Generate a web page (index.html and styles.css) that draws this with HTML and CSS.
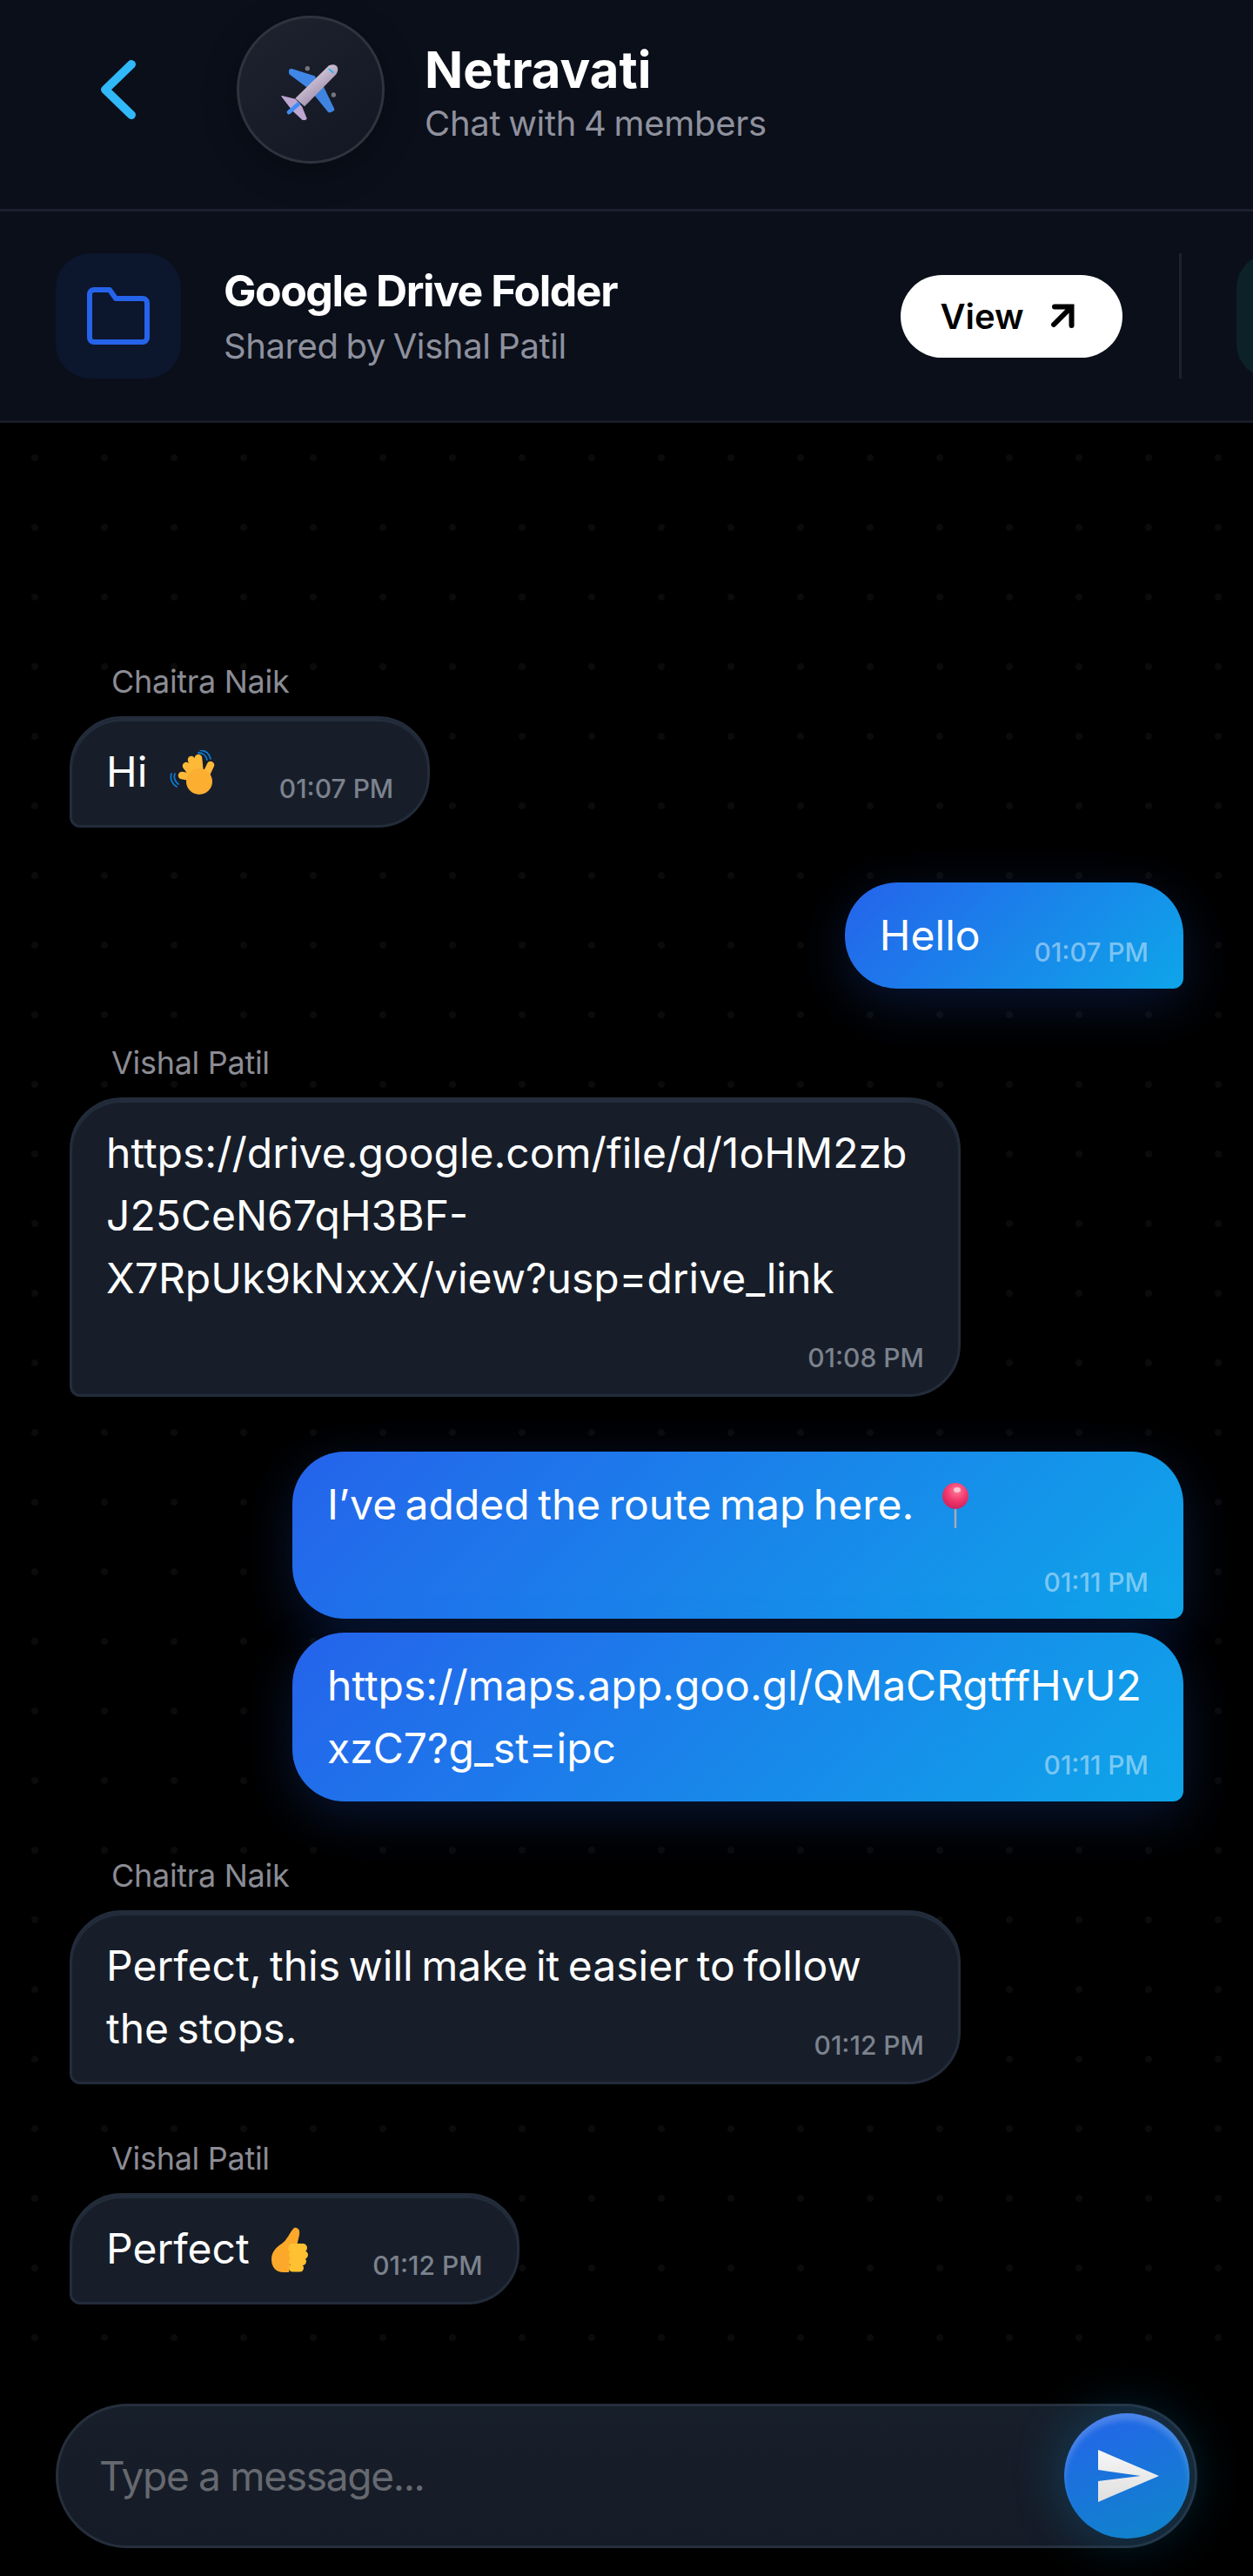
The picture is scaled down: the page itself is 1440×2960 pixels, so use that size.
FILE: index.html
```html
<!DOCTYPE html>
<html lang="en">
  <head>
    <meta charset="UTF-8" />
    <meta name="viewport" content="width=device-width, initial-scale=1.0" />
    <title>Netravati - Chat</title>
    <link rel="stylesheet" href="styles.css">
  </head>

  <body>
    <div class="app">
      <header class="top-bar">
        <button class="back-btn" type="button" aria-label="Back">
          <svg width="40" height="68" viewBox="0 0 40 68"><path d="M35 5 5 34l30 29" fill="none" stroke="#30b8f8" stroke-width="10" stroke-linecap="round" stroke-linejoin="round"/></svg>
        </button>
        <div class="avatar">
          <svg width="70" height="70" viewBox="-2 -15 210 210">
            <defs>
              <linearGradient id="bodyGrad" x1="0.2" y1="0.2" x2="0.6" y2="0.7">
                <stop offset="0" stop-color="#e0d6e4"/>
                <stop offset="1" stop-color="#a897b4"/>
              </linearGradient>
            </defs>
            <circle cx="92" cy="17" r="8" fill="#77767d"/>
            <circle cx="182" cy="108" r="8" fill="#77767d"/>
            <path d="M36 26 112 50 92 74 36 32Z" fill="#4087e6" stroke="#4087e6" stroke-width="16" stroke-linejoin="round"/>
            <path d="M138 76 178 158 168 162 116 98Z" fill="#3f84e0" stroke="#3f84e0" stroke-width="14" stroke-linejoin="round"/>
            <path d="M4 113 50 124 72 150 88 190 80 197 42 162Z" fill="#bda6d2" stroke="#bda6d2" stroke-width="4" stroke-linejoin="round"/>
            <path d="M166 7C180 1 193 3 196 15 199 26 193 37 184 44L82 148 50 120Z" fill="url(#bodyGrad)"/>
            <path d="M28 168 60 140" stroke="#3f8cf5" stroke-width="14" stroke-linecap="round"/>
            <path d="M167 19 180 31" stroke="#19b2f5" stroke-width="5" stroke-linecap="round"/>
          </svg>
        </div>
        <div class="chat-info">
          <h1 class="chat-title">Netravati</h1>
          <p class="chat-sub">Chat with 4 members</p>
        </div>
      </header>

      <section class="shared-strip">
        <div class="shared-card">
          <div class="shared-icon">
            <svg width="72" height="66" viewBox="0 0 72 66"><path d="M3 8a5 5 0 0 1 5-5h18l7 10h31a5 5 0 0 1 5 5v40a5 5 0 0 1-5 5H8a5 5 0 0 1-5-5Z" fill="none" stroke="#2563eb" stroke-width="6" stroke-linejoin="round"/></svg>
          </div>
          <div class="shared-text">
            <div class="shared-name">Google Drive Folder</div>
            <div class="shared-by">Shared by Vishal Patil</div>
          </div>
          <a class="view-btn" href="#">
            View
            <svg width="28" height="28" viewBox="0 0 28 28"><path d="M4 24 24 4M5 3.500h19.500V25" fill="none" stroke="#000" stroke-width="6" stroke-linecap="round"/></svg>
          </a>
        </div>
        <div class="strip-divider"></div>
        <div class="shared-icon shared-icon-next"></div>
      </section>

      <main class="chat">
        <div class="group">
          <div class="sender">Chaitra Naik</div>
          <div class="bubble theirs row">
            <span class="text">Hi
              <svg class="emoji emoji-end" width="52" height="52" viewBox="0 0 52 52">
                <g fill="none" stroke="#1079cc" stroke-width="1.800" stroke-linecap="round">
                  <path d="M33 3C38 3 42 6 43 11"/>
                  <path d="M35 0C41 0 46 4 47 10"/>
                  <path d="M6 27C4 31 6 36 10 39"/>
                  <path d="M2 27C0 33 3 39 8 42"/>
                </g>
                <g fill="none" stroke="#ffb938" stroke-width="8.500" stroke-linecap="round">
                  <path d="M30 32 14 29"/>
                  <path d="M30 32 19 18"/>
                  <path d="M32 30 25 11"/>
                  <path d="M35 30 33 9"/>
                  <path d="M40 32 47 17"/>
                </g>
                <circle cx="34" cy="36" r="15" fill="#fbae30"/>
              </svg>
            </span>
            <span class="time">01:07 PM</span>
          </div>
        </div>

        <div class="group mine">
          <div class="bubble own row">
            <span class="text">Hello</span>
            <span class="time">01:07 PM</span>
          </div>
        </div>

        <div class="group">
          <div class="sender">Vishal Patil</div>
          <div class="bubble theirs wide">
            <span class="text">https://drive.google.com/file/d/1oHM2zbJ25CeN67qH3BF-<br>X7RpUk9kNxxX/view?usp=drive_link</span>
            <span class="time time-row">01:08 PM</span>
          </div>
        </div>

        <div class="group mine">
          <div class="bubble own wide">
            <span class="text">I’ve added the route map here.
              <svg class="emoji emoji-pin" width="30" height="52" viewBox="0 0 30 52">
                <defs>
                  <radialGradient id="pinGrad" cx="0.55" cy="0.3" r="0.75">
                    <stop offset="0" stop-color="#ff7d9c"/>
                    <stop offset="0.5" stop-color="#f23a6d"/>
                    <stop offset="1" stop-color="#c81e5c"/>
                  </radialGradient>
                </defs>
                <path d="M15 28V51" stroke="#a9a9b8" stroke-width="2.500" stroke-linecap="round"/>
                <circle cx="15" cy="15" r="15" fill="url(#pinGrad)"/>
                <ellipse cx="17" cy="8" rx="4" ry="3" fill="#ffc4d2"/>
              </svg>
            </span>
            <span class="time time-row">01:11 PM</span>
          </div>
          <div class="bubble own wide">
            <span class="text">https://maps.app.goo.gl/QMaCRgtffHvU2</span>
            <div class="last-line">
              <span class="text">xzC7?g_st=ipc</span>
              <span class="time">01:11 PM</span>
            </div>
          </div>
        </div>

        <div class="group">
          <div class="sender">Chaitra Naik</div>
          <div class="bubble theirs wide">
            <span class="text">Perfect, this will make it easier to follow</span>
            <div class="last-line">
              <span class="text">the stops.</span>
              <span class="time">01:12 PM</span>
            </div>
          </div>
        </div>

        <div class="group group-late">
          <div class="sender">Vishal Patil</div>
          <div class="bubble theirs row">
            <span class="text">Perfect
              <svg class="emoji emoji-end" width="42" height="52" viewBox="0 0 42 52">
                <path d="M26 1C31 0 33 4 32 9L29 22H22C22 34 22 44 20 52H14C5 52 0 46 0 37 0 28 6 23 12 19 18 15 21 6 26 1Z" fill="#fca82a"/>
                <g fill="#ffc131">
                  <rect x="19" y="19" width="22" height="10" rx="5"/>
                  <rect x="20" y="27.500" width="22" height="9" rx="4.500"/>
                  <rect x="20" y="35" width="20" height="9" rx="4.500"/>
                  <rect x="20" y="42.500" width="17" height="9" rx="4.500"/>
                </g>
              </svg>
            </span>
            <span class="time">01:12 PM</span>
          </div>
        </div>
      </main>

      <footer class="composer">
        <form class="composer-bar">
          <input class="composer-input" type="text" placeholder="Type a message..." />
          <button class="send-btn" type="submit" aria-label="Send">
            <svg width="70" height="60" viewBox="0 0 70 60"><defs><linearGradient id="sendGrad" x1="0" y1="0" x2="0" y2="1"><stop offset="0" stop-color="#f6f6f6"/><stop offset="1" stop-color="#dfdfdf"/></linearGradient></defs><path d="M0 0 70 30 0 60V36L49 30 0 23Z" fill="url(#sendGrad)"/></svg>
          </button>
        </form>
      </footer>
    </div>
  </body>
</html>
```

FILE: styles.css
```css
* {
  box-sizing: border-box;
}

html,
body {
  margin: 0;
  background-color: #000;
}

body {
  font-family: Inter, "Noto Sans", sans-serif;
  color: #fff;
}

.app {
  display: flex;
  flex-direction: column;
  min-height: 2960px;
}

/* Cabecera */
.top-bar {
  display: flex;
  align-items: center;
  height: 243px;
  padding: 19px 0 54px 116px;
  background-color: #0a0f1a;
  border-bottom: 3px solid #1b212e;
}

.back-btn {
  display: flex;
  width: 40px;
  margin-right: 116px;
  padding: 0;
  background: none;
  border: none;
  cursor: pointer;
}

.avatar {
  display: flex;
  align-items: center;
  justify-content: center;
  width: 170px;
  height: 170px;
  border-radius: 50%;
  background: linear-gradient(145deg, #1f232f, #121622);
  border: 3px solid #2f333e;
  box-shadow: 0 10px 40px rgba(0, 0, 0, 0.3);
}

.chat-info {
  margin-left: 46px;
  padding-top: 9px;
}

.chat-title {
  margin: 0;
  font-size: 58px;
  line-height: 64px;
  font-weight: 700;
}

.chat-sub {
  margin: 6px 0 0;
  font-size: 40px;
  line-height: 48px;
  letter-spacing: -0.3px;
  word-spacing: -2px;
  color: #8f919d;
}

/* Carpeta compartida */
.shared-strip {
  display: flex;
  align-items: center;
  height: 243px;
  padding-left: 64px;
  overflow: hidden;
  background-color: #0a0f1a;
  border-bottom: 3px solid #161b26;
}

.shared-card {
  display: flex;
  align-items: center;
  flex: none;
  width: 1226px;
}

.shared-icon {
  flex: none;
  width: 144px;
  height: 144px;
  display: flex;
  align-items: center;
  justify-content: center;
  border-radius: 40px;
  background-color: #0c162d;
}

.shared-icon-next {
  margin-left: 63px;
  background-color: #0c2128;
}

.shared-text {
  flex: 1;
  margin-left: 49px;
}

.shared-name {
  font-size: 50px;
  line-height: 60px;
  font-weight: 700;
  letter-spacing: -1.500px;
}

.shared-by {
  margin-top: 10px;
  font-size: 40px;
  line-height: 48px;
  letter-spacing: -0.4px;
  word-spacing: -2px;
  color: #8f919d;
}

.view-btn {
  display: flex;
  align-items: center;
  justify-content: center;
  gap: 30px;
  width: 255px;
  height: 95px;
  padding-right: 10px;
  border-radius: 48px;
  background-color: #fff;
  color: #000;
  font-size: 40px;
  font-weight: 600;
  text-decoration: none;
}

.strip-divider {
  flex: none;
  width: 3px;
  height: 144px;
  margin-left: 65px;
  background-color: #1b212e;
}

/* Mensajes */
.chat {
  flex: 1;
  padding: 275px 80px 0;
  background-image: radial-gradient(circle, #0b0b0b 3.500px, transparent 4.500px);
  background-size: 80px 80px;
}

.group {
  display: flex;
  flex-direction: column;
  align-items: flex-start;
  margin-bottom: 63px;
}

.group.mine {
  align-items: flex-end;
  gap: 16px;
}

.group-late {
  margin-top: 4px;
}

.sender {
  margin: 0 0 18px 48px;
  font-size: 36px;
  line-height: 44px;
  letter-spacing: -0.3px;
  color: #8b8c94;
}

.bubble {
  display: flex;
  flex-direction: column;
  padding: 25px 40px;
  border-radius: 60px 60px 60px 12px;
}

.bubble.row {
  flex-direction: row;
  gap: 62px;
}

.bubble.wide {
  width: 1024px;
}

.bubble.theirs {
  padding: 25px 39px;
  background-color: #171e2a;
  border: 3px solid #232c3a;
  box-shadow: inset 0 3px 0 #232c3a;
}

.bubble.own {
  border-radius: 60px 60px 12px 60px;
  background: linear-gradient(135deg, #2563eb, #0ea5e9);
  box-shadow: 0 16px 60px rgba(37, 99, 235, 0.22);
}

.last-line {
  display: flex;
  justify-content: space-between;
}

.text {
  display: block;
  font-size: 48px;
  line-height: 72px;
  word-spacing: -4px;
  overflow-wrap: anywhere;
}

.emoji {
  display: inline-block;
  vertical-align: -10px;
  margin-left: 16px;
}

.emoji-end {
  margin-right: 12px;
}

.emoji-pin {
  margin-left: 23px;
}

.time {
  align-self: flex-end;
  flex: none;
  margin-bottom: -2px;
  font-size: 30px;
  line-height: 38px;
  font-weight: 500;
  color: #7c828d;
}

.own .time {
  color: rgba(255, 255, 255, 0.45);
}

.time-row {
  margin-top: 34px;
}

.theirs .time-row {
  margin-top: 36px;
}

/* Caja de texto */
.composer {
  padding: 32px 64px;
}

.composer-bar {
  display: flex;
  align-items: center;
  height: 166px;
  padding: 0 6px 0 47px;
  border-radius: 83px;
  background: linear-gradient(180deg, #171f2b, #151b27);
  border: 3px solid #262f3c;
}

.composer-input {
  flex: 1;
  min-width: 0;
  padding: 0;
  background: none;
  border: none;
  outline: none;
  color: #fff;
  font-family: inherit;
  font-size: 46px;
  letter-spacing: -1.300px;
}

.composer-input::placeholder {
  color: #66696f;
  opacity: 1;
}

.send-btn {
  display: flex;
  align-items: center;
  justify-content: center;
  flex: none;
  width: 144px;
  height: 144px;
  padding: 0 0 0 4px;
  border: none;
  border-radius: 50%;
  background: linear-gradient(160deg, #2563eb, #0e86c9);
  box-shadow: inset 0 8px 6px rgba(255, 255, 255, 0.18), 0 0 60px rgba(14, 165, 233, 0.28);
  cursor: pointer;
}
```
